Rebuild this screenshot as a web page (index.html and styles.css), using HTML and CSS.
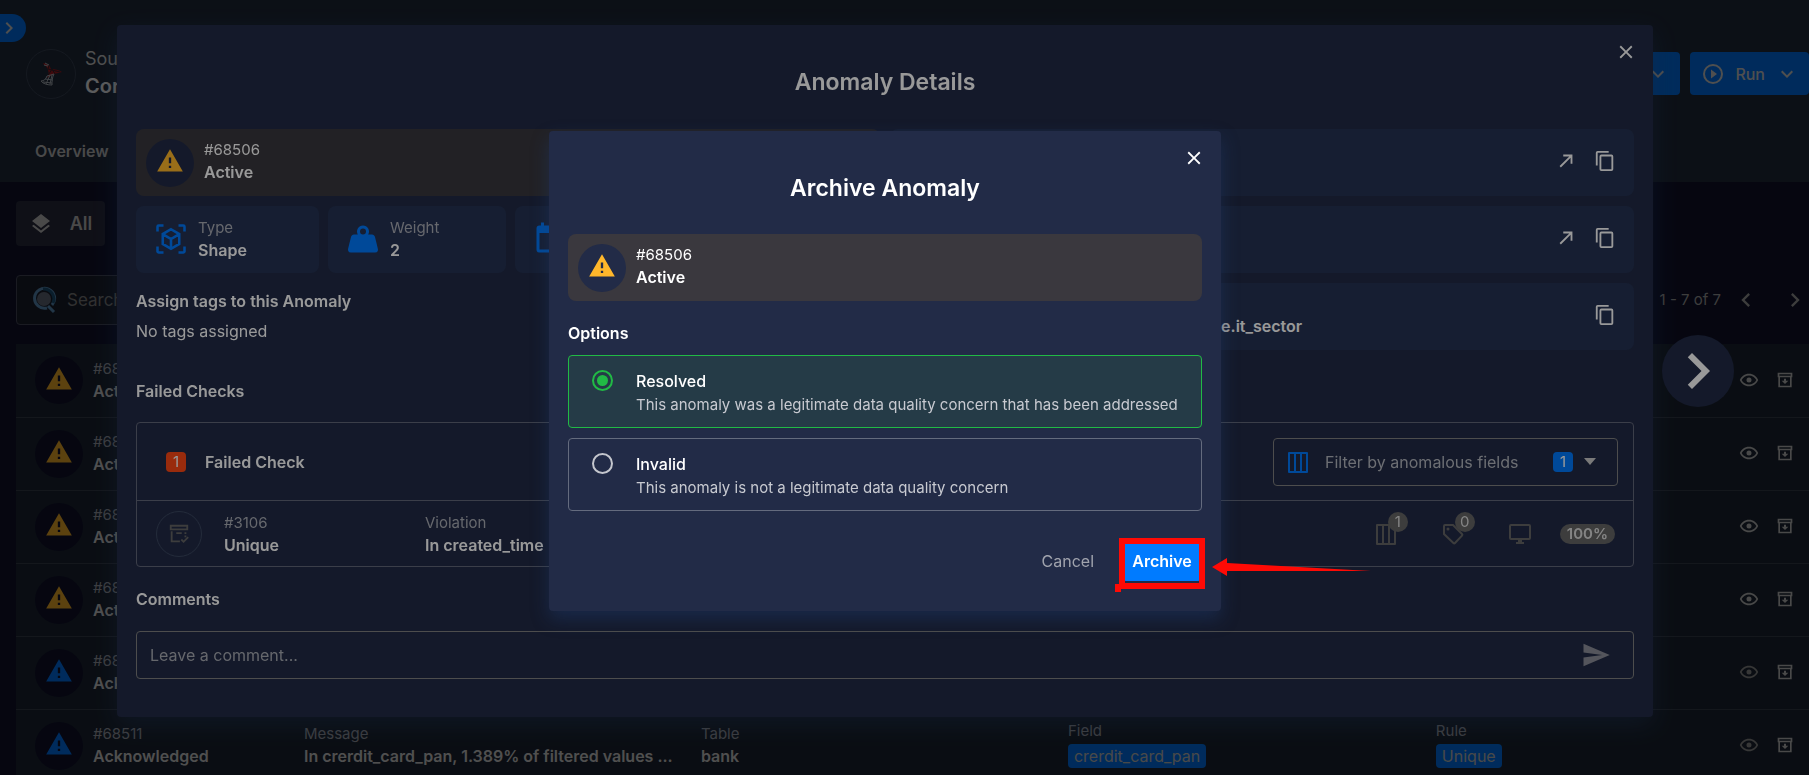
FILE: index.html
```html
<!DOCTYPE html>
<html lang="en">
<head>
<meta charset="utf-8">
<title>Anomaly Details</title>
<link rel="stylesheet" href="styles.css">
</head>
<body>
<svg class="sprite" aria-hidden="true">
  <symbol id="alert" viewBox="0 0 24 24"><path d="M13 14H11V9H13M13 18H11V16H13M1 21H23L12 2L1 21Z"/></symbol>
  <symbol id="eye" viewBox="0 0 24 24"><path d="M12 9a3 3 0 1 1 0 6 3 3 0 0 1 0-6M12 4.500C17 4.500 21.270 7.610 23 12 21.270 16.390 17 19.500 12 19.500S2.730 16.390 1 12C2.730 7.610 7 4.500 12 4.500M3.180 12C4.830 15.360 8.240 17.500 12 17.500s7.170-2.140 8.820-5.500C19.170 8.640 15.760 6.500 12 6.500S4.830 8.640 3.180 12Z"/></symbol>
  <symbol id="archive" viewBox="0 0 24 24"><path d="M1 1h22v7h-1v15H2V8H1zM3.500 3.500v2h17v-2zM4.500 8v12.500h15V8zM10.500 10h3v3H17l-5 5-5-5h3.500z"/></symbol>
  <symbol id="close" viewBox="0 0 24 24"><path d="M19 6.410 17.590 5 12 10.590 6.410 5 5 6.410 10.590 12 5 17.590 6.410 19 12 13.410 17.590 19 19 17.590 13.410 12z"/></symbol>
  <symbol id="copy" viewBox="0 0 24 24"><path d="M19 21H8V7h11m0-2H8a2 2 0 0 0-2 2v14a2 2 0 0 0 2 2h11a2 2 0 0 0 2-2V7a2 2 0 0 0-2-2m-3-4H4a2 2 0 0 0-2 2v14h2V3h12z"/></symbol>
  <symbol id="arrow" viewBox="0 0 24 24"><path d="M5 17.590 15.590 7H9V5h10v10h-2V8.410L6.410 19z"/></symbol>
  <symbol id="right" viewBox="0 0 24 24"><path d="M8.590 16.580 13.170 12 8.590 7.410 10 6l6 6-6 6z"/></symbol>
  <symbol id="left" viewBox="0 0 24 24"><path d="M15.410 16.580 10.830 12l4.580-4.590L14 6l-6 6 6 6z"/></symbol>
  <symbol id="down" viewBox="0 0 24 24"><path d="M7.410 8.580 12 13.170l4.590-4.590L18 10l-6 6-6-6z"/></symbol>
  <symbol id="layers" viewBox="0 0 24 24"><path d="M12 16l7.360-5.730L21 9l-9-7-9 7 1.630 1.270M12 18.540l-7.380-5.730L3 14.070l9 7 9-7-1.630-1.270z"/></symbol>
  <symbol id="weight" viewBox="0 0 24 24"><path d="M12 3a4 4 0 0 1 3.460 6H18c.95 0 1.750.67 1.950 1.560C21.960 18.570 22 18.780 22 19a2 2 0 0 1-2 2H4a2 2 0 0 1-2-2c0-.22.04-.43 2.050-8.440C4.250 9.670 5.050 9 6 9h2.540A4 4 0 0 1 12 3m0 2a2 2 0 1 0 0 4 2 2 0 0 0 0-4Z"/></symbol>
  <symbol id="cube" viewBox="0 0 24 24"><path d="M3 7V3.800Q3 3 3.800 3H7M17 3h3.200q.8 0 .8.800V7M21 17v3.200q0 .8-.8.800H17M7 21H3.800Q3 21 3 20.200V17M12 5.500l5.500 3.200v6.600L12 18.500l-5.500-3.200V8.700zM6.500 8.700L12 12l5.500-3.300M12 12v6.500" fill="none" stroke="currentColor" stroke-width="1.700"/></symbol>
  <symbol id="calendar" viewBox="0 0 24 24"><path d="M6 1v2H5a2 2 0 0 0-2 2v14a2 2 0 0 0 2 2h8v-2H5V8h14v3h2V5a2 2 0 0 0-2-2h-1V1h-2v2H8V1zM18 12a5 5 0 1 0 0 10 5 5 0 0 0 0-10m-1 2h1.500v3l2 1.200-.8 1.200-2.700-1.600z"/></symbol>
  <symbol id="columns" viewBox="0 0 24 24"><path d="M3 3h18v19H3zM9 3v19M15 3v19" fill="none" stroke="currentColor" stroke-width="2" stroke-linejoin="round"/></symbol>
  <symbol id="tag" viewBox="0 0 24 24"><path d="M3 4q0-1 1-1h8l9 9q.8.800 0 1.600l-7 7.400q-.8.800-1.600 0L3 12z" fill="none" stroke="currentColor" stroke-width="2"/><circle cx="7" cy="7" r="1.500"/></symbol>
  <symbol id="monitor" viewBox="0 0 24 24"><path d="M21 16H3V4h18m0-2H3a2 2 0 0 0-2 2v12a2 2 0 0 0 2 2h7v2H8v2h8v-2h-2v-2h7a2 2 0 0 0 2-2V4a2 2 0 0 0-2-2"/></symbol>
  <symbol id="send" viewBox="0 0 24 24"><path d="M2 21 23 12 2 3v7l15 2-15 2z"/></symbol>
  <symbol id="play" viewBox="0 0 24 24"><path d="M12 20a8 8 0 1 1 0-16 8 8 0 0 1 0 16m0-18a10 10 0 1 0 0 20 10 10 0 0 0 0-20m-2 14.500 6-4.500-6-4.500z"/></symbol>
  <symbol id="check" viewBox="0 0 24 24"><path d="M3 3h18v4H3zM4 9v11h9M9 11h6M19 10v2M19 13.500v2" fill="none" stroke="currentColor" stroke-width="2"/><path d="M14.500 18l2.500 2.500 5-5" fill="none" stroke="currentColor" stroke-width="2"/></symbol>
  <symbol id="server" viewBox="0 0 24 24"><path class="server-top" d="M5 1l5 2 2 4c4 0 8 1 11 3l-8 2-7 4c2-3 2-5 1-8-1-3-2-4-5-6z"/><path class="server-mesh" d="M10 3l-1 4 12 3M8 15l5-8 3 5"/><path class="server-base" d="M8 14l7-2c-2 4-2 7-2 11-4 0-9-1-11-4 3 0 5-2 6-5zM6 17l8 1M4 20l9 1M11 13l-4 9M6 1l4 2M5 3l4 1M11 22l2-9"/></symbol>
  <symbol id="lens" viewBox="0 0 24 28"><path d="M15 22A10 10 0 1 1 20 19" class="lens-ring"/><path d="M11 3A10 10 0 0 1 21 17" class="lens-dark"/><circle cx="12" cy="13" r="7" class="lens-glass"/><path d="M16 20l6 6" class="lens-ring"/></symbol>
</svg>

<div class="app">
  <header class="header">
    <button class="expand" aria-label="Expand menu"><svg class="i24"><use href="#right"/></svg></button>
    <div class="header-main">
      <div class="store">
        <span class="store-logo"><svg class="i24"><use href="#server"/></svg></span>
        <div><div class="store-kind">Source</div><div class="store-name">Consol</div></div>
      </div>
      <div class="header-actions">
        <button class="btn">Add<svg class="i24"><use href="#down"/></svg></button>
        <button class="btn"><svg class="i24"><use href="#play"/></svg><span>Run</span><svg class="i24"><use href="#down"/></svg></button>
      </div>
    </div>
    <nav><a class="tab" href="#overview">Overview</a></nav>
  </header>
  <main class="page">
    <button class="all"><svg class="i24"><use href="#layers"/></svg>All</button>
    <div class="tools">
      <label class="search"><svg class="lens"><use href="#lens"/></svg><input type="text" placeholder="Search" aria-label="Search anomalies"></label>
      <div class="pager"><span>1 - 7 of 7</span><button aria-label="Previous page"><svg class="i28"><use href="#left"/></svg></button><button aria-label="Next page"><svg class="i28"><use href="#right"/></svg></button></div>
    </div>
    <table class="list">
      <colgroup><col class="c-id"><col class="c-msg"><col class="c-table"><col class="c-field"><col class="c-rule"><col class="c-act"></colgroup>
      <tbody>
        <tr><td><div class="who"><span class="disc"><svg class="i28"><use href="#alert"/></svg></span><div class="pair"><span>#68</span><b>Activ</b></div></div></td><td></td><td></td><td></td><td></td><td><div class="acts"><button aria-label="View"><svg class="i20"><use href="#eye"/></svg></button><button aria-label="Archive"><svg class="i16"><use href="#archive"/></svg></button></div></td></tr>
        <tr><td><div class="who"><span class="disc"><svg class="i28"><use href="#alert"/></svg></span><div class="pair"><span>#68</span><b>Activ</b></div></div></td><td></td><td></td><td></td><td></td><td><div class="acts"><button aria-label="View"><svg class="i20"><use href="#eye"/></svg></button><button aria-label="Archive"><svg class="i16"><use href="#archive"/></svg></button></div></td></tr>
        <tr><td><div class="who"><span class="disc"><svg class="i28"><use href="#alert"/></svg></span><div class="pair"><span>#68</span><b>Activ</b></div></div></td><td></td><td></td><td></td><td></td><td><div class="acts"><button aria-label="View"><svg class="i20"><use href="#eye"/></svg></button><button aria-label="Archive"><svg class="i16"><use href="#archive"/></svg></button></div></td></tr>
        <tr><td><div class="who"><span class="disc"><svg class="i28"><use href="#alert"/></svg></span><div class="pair"><span>#68</span><b>Activ</b></div></div></td><td></td><td></td><td></td><td></td><td><div class="acts"><button aria-label="View"><svg class="i20"><use href="#eye"/></svg></button><button aria-label="Archive"><svg class="i16"><use href="#archive"/></svg></button></div></td></tr>
        <tr class="seen"><td><div class="who"><span class="disc"><svg class="i28"><use href="#alert"/></svg></span><div class="pair"><span>#68</span><b>Ackn</b></div></div></td><td></td><td></td><td></td><td></td><td><div class="acts"><button aria-label="View"><svg class="i20"><use href="#eye"/></svg></button><button aria-label="Archive"><svg class="i16"><use href="#archive"/></svg></button></div></td></tr>
        <tr class="seen"><td><div class="who"><span class="disc"><svg class="i28"><use href="#alert"/></svg></span><div class="pair"><span>#68511</span><b>Acknowledged</b></div></div></td>
          <td><div class="pair"><span>Message</span><b>In crerdit_card_pan, 1.389% of filtered values ...</b></div></td>
          <td><div class="pair"><span>Table</span><b>bank</b></div></td>
          <td><div class="chips"><span>Field</span><a class="chip" href="#field">crerdit_card_pan</a></div></td>
          <td><div class="chips"><span>Rule</span><a class="chip" href="#rule">Unique</a></div></td>
          <td><div class="acts"><button aria-label="View"><svg class="i20"><use href="#eye"/></svg></button><button aria-label="Archive"><svg class="i16"><use href="#archive"/></svg></button></div></td></tr>
      </tbody>
    </table>
  </main>
</div>

<div class="layer layer-details">
  <section class="modal details" role="dialog" aria-label="Anomaly Details">
    <button class="close" aria-label="Close details"><svg class="i22"><use href="#close"/></svg></button>
    <h1 class="title">Anomaly Details</h1>
    <div class="summary">
      <div class="col">
        <div class="status"><span class="disc"><svg class="i28"><use href="#alert"/></svg></span><div class="status-text"><div class="num">#68506</div><div class="state">Active</div></div></div>
        <div class="facts">
          <div class="card fact fact-type"><svg class="i36"><use href="#cube"/></svg><div class="pair"><span>Type</span><b>Shape</b></div></div>
          <div class="card fact fact-weight"><svg class="i36"><use href="#weight"/></svg><div class="pair"><span>Weight</span><b>2</b></div></div>
          <div class="card fact fact-date"><svg class="i36"><use href="#calendar"/></svg></div>
        </div>
        <div class="tags"><h2>Assign tags to this Anomaly</h2><p>No tags assigned</p></div>
      </div>
      <div class="col">
        <div class="card link"><button aria-label="Open"><svg class="i22"><use href="#arrow"/></svg></button><button aria-label="Copy"><svg class="i22"><use href="#copy"/></svg></button></div>
        <div class="card link"><button aria-label="Open"><svg class="i22"><use href="#arrow"/></svg></button><button aria-label="Copy"><svg class="i22"><use href="#copy"/></svg></button></div>
        <div class="card link"><div class="pair path"><span>Id</span><b>table.it_sector</b></div><button aria-label="Copy"><svg class="i22"><use href="#copy"/></svg></button></div>
      </div>
    </div>
    <h2 class="h-checks">Failed Checks</h2>
    <div class="checks">
      <div class="checks-head">
        <span class="count count-red">1</span><h3>Failed Check</h3>
        <label class="filter"><svg class="i24"><use href="#columns"/></svg><select aria-label="Filter by anomalous fields"><option>Filter by anomalous fields</option></select><span class="count count-blue">1</span><span class="caret"></span></label>
      </div>
      <div class="check-row">
        <span class="ring"><svg class="i22"><use href="#check"/></svg></span>
        <div class="pair check-id"><span>#3106</span><b>Unique</b></div>
        <div class="pair"><span>Violation</span><b>In created_time</b></div>
        <div class="meta">
          <span class="meta-icon"><svg class="i24"><use href="#columns"/></svg><span class="bubble">1</span></span>
          <span class="meta-icon"><svg class="i24"><use href="#tag"/></svg><span class="bubble">0</span></span>
          <span class="meta-icon"><svg class="i24"><use href="#monitor"/></svg></span>
          <span class="pct">100%</span>
        </div>
      </div>
    </div>
    <h2 class="h-comments">Comments</h2>
    <div class="comment"><input type="text" placeholder="Leave a comment..." aria-label="Leave a comment"><button aria-label="Send"><svg class="i30"><use href="#send"/></svg></button></div>
  </section>
  <button class="next" aria-label="Next anomaly"><svg class="i72"><use href="#right"/></svg></button>
</div>

<div class="layer layer-archive">
  <form class="modal archive" role="dialog" aria-label="Archive Anomaly">
    <button type="button" class="close" aria-label="Close"><svg class="i22"><use href="#close"/></svg></button>
    <h1 class="title">Archive Anomaly</h1>
    <div class="status"><span class="disc"><svg class="i28"><use href="#alert"/></svg></span><div class="status-text"><div class="num">#68506</div><div class="state">Active</div></div></div>
    <fieldset class="options">
      <legend>Options</legend>
      <label class="option"><input type="radio" name="reason" checked><span><span class="option-name">Resolved</span><span class="option-text">This anomaly was a legitimate data quality concern that has been addressed</span></span></label>
      <label class="option"><input type="radio" name="reason"><span><span class="option-name">Invalid</span><span class="option-text">This anomaly is not a legitimate data quality concern</span></span></label>
    </fieldset>
    <div class="actions"><button type="button" class="cancel">Cancel</button><button type="submit" class="submit">Archive</button></div>
    <svg class="mark" viewBox="0 0 260 60" aria-hidden="true"><path d="M8 4h80v45H8z" fill="none" stroke="#ff0a05" stroke-width="6"/><path d="M1 47h6v8H1zM98 30l15-9v5l144 8-144 0v5z" fill="#ff0a05"/></svg>
  </form>
</div>
</body>
</html>
```
FILE: styles.css
```css
* { box-sizing: border-box; }
html, body { height: 100%; }
body { margin: 0; overflow: hidden; background: #111330; color: #fff; font-family: Inter, "Noto Sans", sans-serif; font-size: 16px; line-height: 24px; }
h1, h2, h3, p { margin: 0; }
h2, h3 { font-size: 16px; line-height: 24px; font-weight: 600; }
b { font-weight: 600; }
button { padding: 0; border: 0; background: none; color: inherit; font: inherit; display: flex; align-items: center; justify-content: center; cursor: pointer; }
input, select { font: inherit; color: inherit; background: none; border: 0; outline: 0; padding: 0; min-width: 0; }
a { color: inherit; text-decoration: none; }
svg { fill: currentColor; display: block; flex: none; }
.sprite { position: absolute; width: 0; height: 0; }
.i16 { width: 16px; height: 16px; }
.i20 { width: 20px; height: 20px; }
.i22 { width: 22px; height: 22px; }
.i24 { width: 24px; height: 24px; }
.i28 { width: 28px; height: 28px; }
.i30 { width: 30px; height: 30px; }
.i36 { width: 36px; height: 36px; }
.i72 { width: 72px; height: 72px; }

.app { height: 100vh; overflow: hidden; }
.header { height: 182px; background: #222d3f; position: relative; padding-top: 43px; }
.expand { position: absolute; left: 0; top: 14px; width: 26px; height: 28px; border-radius: 0 14px 14px 0; background: #007bff; padding-right: 8px; color: #ddd; }
.header-main { display: flex; justify-content: space-between; align-items: center; height: 61px; padding-left: 26px; }
.store { display: flex; align-items: center; gap: 9px; }
.store-logo { width: 50px; height: 50px; border: 1px solid #3b475a; border-radius: 50%; display: grid; place-items: center; }
.store-kind { font-size: 18px; line-height: 26px; color: #ddd; padding-top: 2px; }
.store-name { font-size: 20px; line-height: 28px; font-weight: 600; padding-bottom: 4px; }
.server-top { fill: #b01c22; }
.server-mesh { fill: none; stroke: #3a2531; }
.server-base { fill: none; stroke: #b4bcc4; stroke-width: 1; }
.header-actions { display: flex; gap: 10px; }
.btn { height: 43px; border-radius: 4px; background: #007bff; gap: 10px; padding: 0 10px 0 11px; font-size: 16px; font-weight: 500; color: #ddd; }
.tab { display: inline-block; margin: 35px 0 0 35px; font-weight: 600; font-size: 16px; color: #ccc; }
.page { padding: 19px 0 0 16px; }
.all { width: 89px; height: 45px; border-radius: 4px; background: #2b2d41; font-size: 18px; font-weight: 600; gap: 17px; color: #ccc; }
.tools { display: flex; justify-content: space-between; align-items: center; margin: 29px 0 19px; }
.search { width: 480px; height: 50px; border: 1px solid #4a4d60; border-radius: 4px; background: #1c2130; display: flex; align-items: center; gap: 10px; padding-left: 14px; font-size: 17px; }
.search input::placeholder { color: #888; opacity: 1; }
.lens { width: 26px; height: 28px; }
.lens-ring { fill: none; stroke: #5f97c6; stroke-width: 3; }
.lens-dark { fill: none; stroke: #1d567c; stroke-width: 3; }
.lens-glass { fill: #6a7282; }
.pager { display: flex; align-items: center; color: #aaa; font-size: 15px; }
.pager span { margin-right: 11px; }
.pager button + button { margin-left: 21px; }
.list { width: 100%; border-collapse: collapse; table-layout: fixed; background: #1e2736; }
.c-id { width: 16.060%; } .c-msg { width: 22.140%; } .c-table { width: 20.470%; } .c-field { width: 20.520%; } .c-act { width: 74px; }
.list tr { height: 73px; border-bottom: 1px solid #3a4251; }
.list td { padding: 0; }
.who { display: flex; align-items: center; gap: 10px; padding-left: 19px; }
.disc { width: 48px; height: 48px; border-radius: 50%; display: grid; place-items: center; color: #ffb72b; background: #222b47; flex: none; padding-bottom: 3px; }
.list .disc { background: #111330; }
.seen .disc { color: #007bff; }
.pair { display: flex; flex-direction: column; line-height: 23px; white-space: nowrap; }
.pair > span { font-size: 15px; color: #aaadb6; }
.list .pair { padding-bottom: 1px; }
.list .pair > b { color: #ddd; }
.chips { display: flex; flex-direction: column; align-items: flex-start; gap: 2px; line-height: 22px; font-size: 15px; color: #aaadb6; padding-bottom: 3px; }
.chip { background: #007bff; border-radius: 4px; padding: 1px 6px; color: #ccc; font-size: 16px; }
.acts { display: flex; align-items: center; gap: 18px; color: #ccc; padding: 0 0 1px 4px; }
.seen .acts button:first-child { color: #999; }

.layer { position: fixed; inset: 0; background: rgba(0, 0, 0, .4); }
.layer-details { padding: 25px 156px 0 117px; }
.layer-archive { padding: 131px 39px 0 0; }
.modal { position: relative; background: #222b47; border-radius: 4px; padding: 41px 19px 0; margin: 0 auto; }
.details { padding-bottom: 38px; box-shadow: 0 8px 24px rgba(38, 68, 112, .35); }
.archive { max-width: 672px; padding-bottom: 30px; box-shadow: 0 8px 18px rgba(33, 66, 120, .4); }
.close { position: absolute; top: 16px; right: 16px; }
.title { font-size: 23px; line-height: 32px; font-weight: 600; text-align: center; margin-bottom: 30px; }
.details .title { margin-bottom: 31px; }
.status { display: flex; align-items: center; height: 67px; background: #3a383e; border-radius: 8px; padding-left: 10px; gap: 10px; line-height: 22px; }
.status-text { padding-bottom: 3px; }
.num { font-size: 15px; }
.state { font-weight: 600; }
.summary { display: grid; grid-template-columns: 1fr 1fr; gap: 10px; }
.col { display: flex; flex-direction: column; gap: 10px; }
.card { background: #263354; border-radius: 8px; height: 67px; display: flex; align-items: center; }
.facts { display: flex; gap: 9px; }
.fact { gap: 9px; padding: 0 0 2px 17px; }
.fact svg { color: #007bff; }
.fact-type { width: 183px; } .fact-weight { width: 178px; } .fact-date { flex: 1; }
.tags { padding-top: 6px; }
.tags p { margin-top: 6px; }
.link { justify-content: flex-end; gap: 17px; padding: 0 18px 3px 0; }
.path { margin-right: auto; padding: 0 0 0 302px; }
.h-checks { margin-top: 29px; }
.checks { border: 1px solid #63687a; border-radius: 4px; margin-top: 19px; }
.checks-head { height: 78px; border-bottom: 1px solid #63687a; display: flex; align-items: center; padding: 0 15px 0 29px; gap: 19px; }
.count { width: 20px; height: 20px; border-radius: 4px; font-size: 15px; line-height: 20px; text-align: center; flex: none; }
.count-red { background: #ff4815; }
.count-blue { background: #007bff; }
.filter { margin-left: auto; width: 345px; height: 48px; border: 1px solid #808080; border-radius: 4px; display: flex; align-items: center; padding: 0 21px 0 12px; }
.filter svg { color: #007bff; }
.filter select { appearance: none; flex: 1; margin-left: 15px; color: #b5b8c0; }
.caret { border: 6px solid transparent; border-top: 7px solid #ccc; border-bottom: 0; margin-left: 11px; }
.check-row { height: 65px; display: flex; align-items: center; padding: 0 18px 0 19px; }
.ring { width: 46px; height: 46px; border: 1px solid #3c4862; border-radius: 50%; display: grid; place-items: center; color: #666; }
.check-id { width: 201px; margin-left: 22px; }
.meta { margin-left: auto; display: flex; align-items: center; color: #666; }
.meta-icon { position: relative; margin-right: 43px; }
.meta-icon:nth-child(3) { margin-right: 28px; }
.bubble { position: absolute; left: 14px; top: -10px; min-width: 20px; height: 20px; border-radius: 10px; background: #666; color: #ddd; font-size: 15px; line-height: 20px; text-align: center; }
.pct { background: #666; color: #ddd; border-radius: 10px; line-height: 20px; padding: 0 7px; font-size: 15px; font-weight: 600; }
.h-comments { margin-top: 20px; }
.comment { margin-top: 20px; height: 48px; border: 1px solid #808080; border-radius: 4px; display: flex; align-items: center; padding: 0 22px 0 13px; }
.comment input { flex: 1; }
.comment input::placeholder { color: #a9acb5; opacity: 1; }
.comment button { color: #8c8e99; }
.next { position: absolute; right: 75px; top: 335px; width: 72px; height: 72px; border-radius: 50%; background: #222b47; }

.options { border: 0; margin: 20px 0 0; padding: 0; display: flex; flex-direction: column; gap: 10px; }
.options legend { padding: 0; margin-bottom: 10px; font-weight: 600; line-height: 24px; }
.option { height: 73px; border: 1px solid #646b7e; border-radius: 4px; display: flex; align-items: flex-start; gap: 23px; padding: 13px 20px 0 23px; }
.option:has(input:checked) { border-color: #21ba45; background: #253b47; }
.option input { appearance: none; width: 21px; height: 21px; border: 2px solid #c4c6cd; border-radius: 50%; margin: 1px 0 0; flex: none; }
.option input:checked { border-color: #21ba45; background: #21ba45; background-clip: content-box; padding: 3px; }
.option-name, .option-text { display: block; white-space: nowrap; }
.option-name { font-weight: 500; }
.option-text { font-size: 15px; color: #c8cad1; }
.actions { display: flex; justify-content: flex-end; gap: 28px; margin-top: 30px; }
.actions button { height: 40px; }
.cancel { color: #a0a3ad; }
.submit { width: 80px; background: #007bff; border-radius: 4px; font-weight: 600; }
.mark { position: absolute; left: 565px; bottom: 14px; width: 260px; height: 60px; }
```
